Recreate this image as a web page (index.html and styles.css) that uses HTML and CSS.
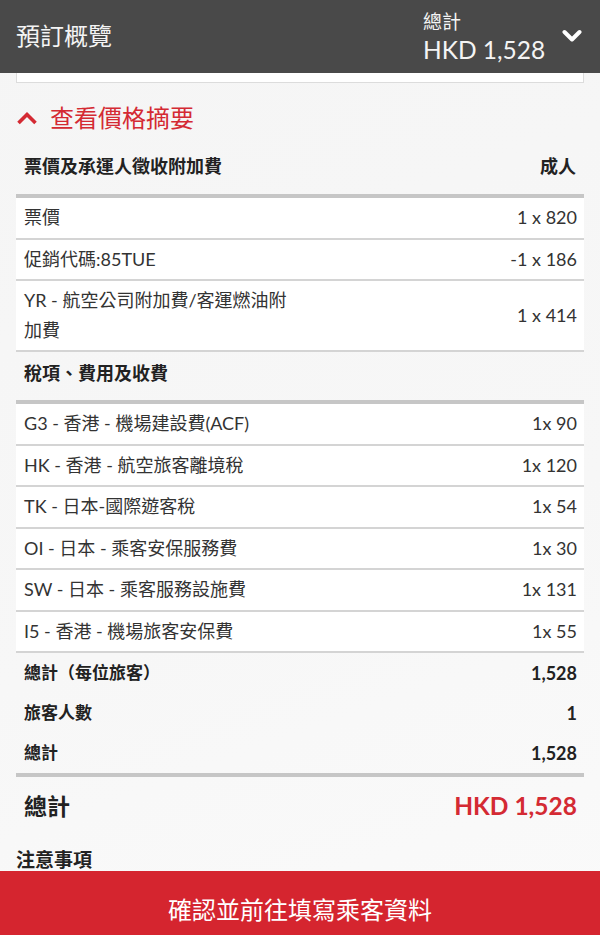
FILE: index.html
```html
<!DOCTYPE html>
<html lang="zh-Hant">
<head>
<meta charset="utf-8">
<title>預訂概覽</title>
<link rel="stylesheet" href="styles.css">
</head>
<body>
<header class="topbar">
  <h1 class="topbar-title">預訂概覽</h1>
  <div class="topbar-total">
    <div class="topbar-total-label">總計</div>
    <div class="topbar-total-amount">HKD 1,528</div>
  </div>
  <svg class="topbar-chevron" width="20" height="14" viewBox="0 0 20 14"><polyline points="2.5,3 10,10.5 17.5,3" fill="none" stroke="#fff" stroke-width="4" stroke-linecap="round" stroke-linejoin="round"/></svg>
</header>

<main class="content">
  <div class="card-stub"></div>

  <div class="toggle">
    <svg class="toggle-caret" width="22" height="14" viewBox="0 0 22 14"><polyline points="2.5,12 11,3.5 19.5,12" fill="none" stroke="#d42a33" stroke-width="3.6" stroke-linejoin="miter"/></svg>
    <span class="toggle-text">查看價格摘要</span>
  </div>

  <div class="section-head first">
    <span>票價及承運人徵收附加費</span>
    <span>成人</span>
  </div>
  <div class="row"><span class="label">票價</span><span class="value">1 x 820</span></div>
  <div class="row"><span class="label">促銷代碼:85TUE</span><span class="value">-1 x 186</span></div>
  <div class="row"><span class="label wrap">YR - 航空公司附加費/客運燃油附加費</span><span class="value">1 x 414</span></div>

  <div class="section-head second">
    <span>稅項、費用及收費</span>
  </div>
  <div class="row"><span class="label">G3 - 香港 - 機場建設費(ACF)</span><span class="value">1x 90</span></div>
  <div class="row"><span class="label">HK - 香港 - 航空旅客離境稅</span><span class="value">1x 120</span></div>
  <div class="row"><span class="label">TK - 日本-國際遊客稅</span><span class="value">1x 54</span></div>
  <div class="row"><span class="label">OI - 日本 - 乘客安保服務費</span><span class="value">1x 30</span></div>
  <div class="row"><span class="label">SW - 日本 - 乘客服務設施費</span><span class="value">1x 131</span></div>
  <div class="row"><span class="label">I5 - 香港 - 機場旅客安保費</span><span class="value">1x 55</span></div>

  <div class="totals">
    <div class="total-row"><span>總計（每位旅客）</span><span class="total-value">1,528</span></div>
    <div class="total-row"><span>旅客人數</span><span class="total-value">1</span></div>
    <div class="total-row"><span>總計</span><span class="total-value">1,528</span></div>
  </div>

  <div class="grand">
    <span class="grand-label">總計</span>
    <span class="grand-amount">HKD 1,528</span>
  </div>

  <h2 class="notes">注意事項</h2>
</main>

<footer class="cta">確認並前往填寫乘客資料</footer>
</body>
</html>
```

FILE: styles.css
```css
* { box-sizing: border-box; }

body {
  margin: 0;
  background: linear-gradient(160deg, #f5f5f5 0%, #f7f7f7 60%, #fafafa 100%);
  background-attachment: fixed;
  font-family: "Lato", "Noto Sans CJK TC", sans-serif;
  color: #2b2b2b;
  min-height: 935px;
}

.topbar {
  height: 73px;
  background: #494949;
  color: #f4f4f4;
  display: flex;
  align-items: center;
  padding: 0 18px 0 16px;
}

.topbar-title {
  flex: 1;
  margin: 0;
  font-size: 24px;
  font-weight: 400;
  line-height: 30px;
  padding-bottom: 2px;
}

.topbar-total {
  display: flex;
  flex-direction: column;
  width: 139px;
  margin-top: 2px;
}

.topbar-total-label {
  font-size: 19px;
  line-height: 24px;
}

.topbar-total-amount {
  font-size: 24.5px;
  line-height: 32px;
}

.topbar-chevron {
  display: block;
  margin-bottom: 2px;
}

.content {
  padding: 0 16px 90px;
}

.card-stub {
  height: 10px;
  background: #fff;
  border: 1px solid #dcdcdc;
  border-top: none;
}

.toggle {
  margin-top: 17px;
  height: 36px;
  display: flex;
  align-items: center;
  gap: 12px;
}

.toggle-caret { display: block; }

.toggle-text {
  color: #d42a33;
  font-size: 24px;
  line-height: 36px;
}

.section-head {
  display: flex;
  justify-content: space-between;
  padding: 20px 8px 18px;
  font-size: 18px;
  font-weight: 700;
  line-height: 20px;
  color: #222;
  border-bottom: 4px solid #c6c6c6;
}

.section-head.second {
  padding: 11px 8px 17px;
}

.row {
  display: flex;
  justify-content: space-between;
  align-items: center;
  background: #fff;
  padding: 5px 7px 5px 8px;
  font-size: 18px;
  line-height: 29.5px;
  border-bottom: 2px solid #d4d4d4;
  color: #333;
}

.row .label.wrap {
  max-width: 272px;
}

.row .value {
  white-space: nowrap;
}

.totals {
  border-bottom: 4px solid #c6c6c6;
}

.total-row {
  display: flex;
  justify-content: space-between;
  padding: 0 7px 0 8px;
  font-size: 17px;
  font-weight: 700;
  line-height: 40px;
  color: #222;
}

.total-value {
  font-size: 18px;
}

.grand {
  display: flex;
  justify-content: space-between;
  align-items: center;
  height: 56px;
  padding: 0 7px 0 8px;
  font-weight: 700;
}

.grand-label {
  font-size: 23px;
  color: #222;
}

.grand-amount {
  font-size: 24.5px;
  color: #d42a33;
}

.notes {
  margin: 12px 0 0;
  font-size: 19px;
  font-weight: 700;
  line-height: 30px;
  color: #222;
}

.cta {
  position: fixed;
  left: 0;
  right: 0;
  bottom: 0;
  height: 64px;
  background: #d5252f;
  color: #fff;
  text-align: center;
  font-size: 24px;
  line-height: 30px;
  padding-top: 24px;
}
```
